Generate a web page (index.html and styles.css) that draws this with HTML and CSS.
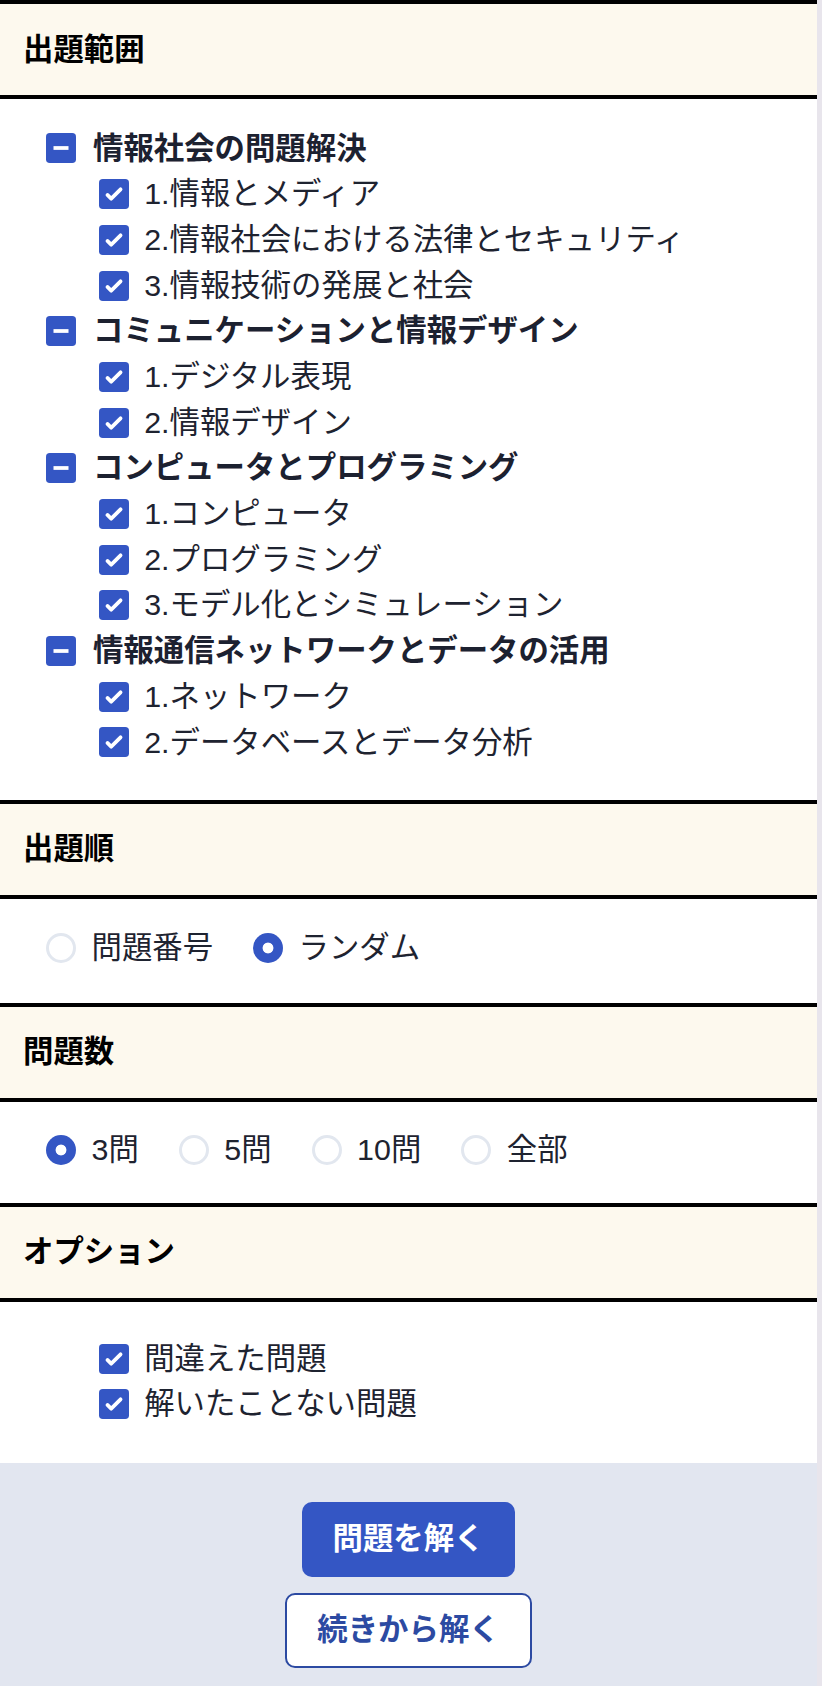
FILE: index.html
```html
<!DOCTYPE html>
<html lang="ja">
<head>
<meta charset="utf-8">
<title>出題設定</title>
<link rel="stylesheet" href="styles.css">
</head>
<body>
<main class="page">
  <section class="section">
    <h2 class="head">出題範囲</h2>
    <div class="body body-range">
      <div class="row group"><svg class="box" viewBox="0 0 16 16"><rect width="16" height="16" rx="2" fill="#3456c4"/><rect x="4" y="7" width="8" height="2" fill="#fff"/></svg><span>情報社会の問題解決</span></div>
      <div class="row sub"><svg class="box" viewBox="0 0 16 16"><rect width="16" height="16" rx="2" fill="#3456c4"/><path d="M12.207 4.793a1 1 0 010 1.414l-5 5a1 1 0 01-1.414 0l-2-2a1 1 0 011.414-1.414L6.5 9.086l4.293-4.293a1 1 0 011.414 0z" fill="#fff"/></svg><span>1.情報とメディア</span></div>
      <div class="row sub"><svg class="box" viewBox="0 0 16 16"><rect width="16" height="16" rx="2" fill="#3456c4"/><path d="M12.207 4.793a1 1 0 010 1.414l-5 5a1 1 0 01-1.414 0l-2-2a1 1 0 011.414-1.414L6.5 9.086l4.293-4.293a1 1 0 011.414 0z" fill="#fff"/></svg><span>2.情報社会における法律とセキュリティ</span></div>
      <div class="row sub"><svg class="box" viewBox="0 0 16 16"><rect width="16" height="16" rx="2" fill="#3456c4"/><path d="M12.207 4.793a1 1 0 010 1.414l-5 5a1 1 0 01-1.414 0l-2-2a1 1 0 011.414-1.414L6.5 9.086l4.293-4.293a1 1 0 011.414 0z" fill="#fff"/></svg><span>3.情報技術の発展と社会</span></div>
      <div class="row group"><svg class="box" viewBox="0 0 16 16"><rect width="16" height="16" rx="2" fill="#3456c4"/><rect x="4" y="7" width="8" height="2" fill="#fff"/></svg><span>コミュニケーションと情報デザイン</span></div>
      <div class="row sub"><svg class="box" viewBox="0 0 16 16"><rect width="16" height="16" rx="2" fill="#3456c4"/><path d="M12.207 4.793a1 1 0 010 1.414l-5 5a1 1 0 01-1.414 0l-2-2a1 1 0 011.414-1.414L6.5 9.086l4.293-4.293a1 1 0 011.414 0z" fill="#fff"/></svg><span>1.デジタル表現</span></div>
      <div class="row sub"><svg class="box" viewBox="0 0 16 16"><rect width="16" height="16" rx="2" fill="#3456c4"/><path d="M12.207 4.793a1 1 0 010 1.414l-5 5a1 1 0 01-1.414 0l-2-2a1 1 0 011.414-1.414L6.5 9.086l4.293-4.293a1 1 0 011.414 0z" fill="#fff"/></svg><span>2.情報デザイン</span></div>
      <div class="row group"><svg class="box" viewBox="0 0 16 16"><rect width="16" height="16" rx="2" fill="#3456c4"/><rect x="4" y="7" width="8" height="2" fill="#fff"/></svg><span>コンピュータとプログラミング</span></div>
      <div class="row sub"><svg class="box" viewBox="0 0 16 16"><rect width="16" height="16" rx="2" fill="#3456c4"/><path d="M12.207 4.793a1 1 0 010 1.414l-5 5a1 1 0 01-1.414 0l-2-2a1 1 0 011.414-1.414L6.5 9.086l4.293-4.293a1 1 0 011.414 0z" fill="#fff"/></svg><span>1.コンピュータ</span></div>
      <div class="row sub"><svg class="box" viewBox="0 0 16 16"><rect width="16" height="16" rx="2" fill="#3456c4"/><path d="M12.207 4.793a1 1 0 010 1.414l-5 5a1 1 0 01-1.414 0l-2-2a1 1 0 011.414-1.414L6.5 9.086l4.293-4.293a1 1 0 011.414 0z" fill="#fff"/></svg><span>2.プログラミング</span></div>
      <div class="row sub"><svg class="box" viewBox="0 0 16 16"><rect width="16" height="16" rx="2" fill="#3456c4"/><path d="M12.207 4.793a1 1 0 010 1.414l-5 5a1 1 0 01-1.414 0l-2-2a1 1 0 011.414-1.414L6.5 9.086l4.293-4.293a1 1 0 011.414 0z" fill="#fff"/></svg><span>3.モデル化とシミュレーション</span></div>
      <div class="row group"><svg class="box" viewBox="0 0 16 16"><rect width="16" height="16" rx="2" fill="#3456c4"/><rect x="4" y="7" width="8" height="2" fill="#fff"/></svg><span>情報通信ネットワークとデータの活用</span></div>
      <div class="row sub"><svg class="box" viewBox="0 0 16 16"><rect width="16" height="16" rx="2" fill="#3456c4"/><path d="M12.207 4.793a1 1 0 010 1.414l-5 5a1 1 0 01-1.414 0l-2-2a1 1 0 011.414-1.414L6.5 9.086l4.293-4.293a1 1 0 011.414 0z" fill="#fff"/></svg><span>1.ネットワーク</span></div>
      <div class="row sub"><svg class="box" viewBox="0 0 16 16"><rect width="16" height="16" rx="2" fill="#3456c4"/><path d="M12.207 4.793a1 1 0 010 1.414l-5 5a1 1 0 01-1.414 0l-2-2a1 1 0 011.414-1.414L6.5 9.086l4.293-4.293a1 1 0 011.414 0z" fill="#fff"/></svg><span>2.データベースとデータ分析</span></div>
    </div>
  </section>

  <section class="section">
    <h2 class="head">出題順</h2>
    <div class="body body-order">
      <div class="radios">
        <label class="radio-item"><span class="radio"></span><span>問題番号</span></label>
        <label class="radio-item"><span class="radio on"></span><span>ランダム</span></label>
      </div>
    </div>
  </section>

  <section class="section">
    <h2 class="head">問題数</h2>
    <div class="body body-count">
      <div class="radios">
        <label class="radio-item"><span class="radio on"></span><span>3問</span></label>
        <label class="radio-item"><span class="radio"></span><span>5問</span></label>
        <label class="radio-item"><span class="radio"></span><span>10問</span></label>
        <label class="radio-item"><span class="radio"></span><span>全部</span></label>
      </div>
    </div>
  </section>

  <section class="section">
    <h2 class="head">オプション</h2>
    <div class="body body-option">
      <div class="row sub"><svg class="box" viewBox="0 0 16 16"><rect width="16" height="16" rx="2" fill="#3456c4"/><path d="M12.207 4.793a1 1 0 010 1.414l-5 5a1 1 0 01-1.414 0l-2-2a1 1 0 011.414-1.414L6.5 9.086l4.293-4.293a1 1 0 011.414 0z" fill="#fff"/></svg><span>間違えた問題</span></div>
      <div class="row sub"><svg class="box" viewBox="0 0 16 16"><rect width="16" height="16" rx="2" fill="#3456c4"/><path d="M12.207 4.793a1 1 0 010 1.414l-5 5a1 1 0 01-1.414 0l-2-2a1 1 0 011.414-1.414L6.5 9.086l4.293-4.293a1 1 0 011.414 0z" fill="#fff"/></svg><span>解いたことない問題</span></div>
    </div>
  </section>

  <footer class="footer">
    <button class="btn btn-primary" type="button">問題を解く</button>
    <button class="btn btn-outline" type="button">続きから解く</button>
  </footer>
</main>
</body>
</html>
```

FILE: styles.css
```css
* {
  box-sizing: border-box;
}

html, body {
  margin: 0;
  padding: 0;
}

body {
  background: #e8e5ec;
  font-family: "Liberation Sans", "Noto Sans CJK JP", sans-serif;
  font-size: 30.4px;
  line-height: 45.7px;
  color: #1e2330;
}

.page {
  width: 817px;
  min-height: 1686px;
  background: #ffffff;
  display: flex;
  flex-direction: column;
}

.section {
  display: flex;
  flex-direction: column;
}

.head {
  margin: 0;
  height: 99px;
  padding: 0 23px;
  display: flex;
  align-items: center;
  background: #fdf9ee;
  border-top: 4px solid #000;
  border-bottom: 4px solid #000;
  font-size: 30.4px;
  font-weight: 700;
  color: #000;
}

.body {
  display: flex;
  flex-direction: column;
}

.body-range {
  padding-top: 26.6px;
  padding-bottom: 34.6px;
}

.body-order {
  padding-top: 26px;
  padding-bottom: 32.3px;
}

.body-count {
  padding-top: 25px;
  padding-bottom: 30.3px;
}

.body-option {
  padding-top: 34px;
  padding-bottom: 35.6px;
}

.row {
  display: flex;
  align-items: center;
  height: 45.7px;
}

.box {
  width: 30px;
  height: 30px;
  flex: none;
  display: block;
}

.group {
  padding-left: 46px;
  gap: 17px;
  font-weight: 700;
  color: #1c2130;
}

.sub {
  padding-left: 99px;
  gap: 15.2px;
}

.radios {
  display: flex;
  align-items: center;
  gap: 40px;
  padding-left: 46px;
  height: 45.7px;
}

.radio-item {
  display: flex;
  align-items: center;
  gap: 15.5px;
}

.radio {
  width: 30px;
  height: 30px;
  border-radius: 50%;
  border: 3.5px solid #e2e7ef;
  background: #fff;
  flex: none;
}

.radio.on {
  border: none;
  background: radial-gradient(circle at center, #ffffff 0, #ffffff 5px, #3456c4 5.8px);
}

.footer {
  flex: 1;
  background: #e2e6f0;
  display: flex;
  flex-direction: column;
  align-items: center;
  gap: 16px;
  padding-top: 39px;
}

.btn {
  height: 75px;
  padding: 0 30.4px;
  border-radius: 10px;
  font-family: "Liberation Sans", "Noto Sans CJK JP", sans-serif;
  font-size: 30.4px;
  font-weight: 700;
  line-height: 45.7px;
  display: flex;
  align-items: center;
  justify-content: center;
  cursor: pointer;
}

.btn-primary {
  background: #3456c4;
  color: #ffffff;
  border: none;
}

.btn-outline {
  background: #ffffff;
  color: #2c4aa2;
  border: 2px solid #2c4aa2;
}
```
